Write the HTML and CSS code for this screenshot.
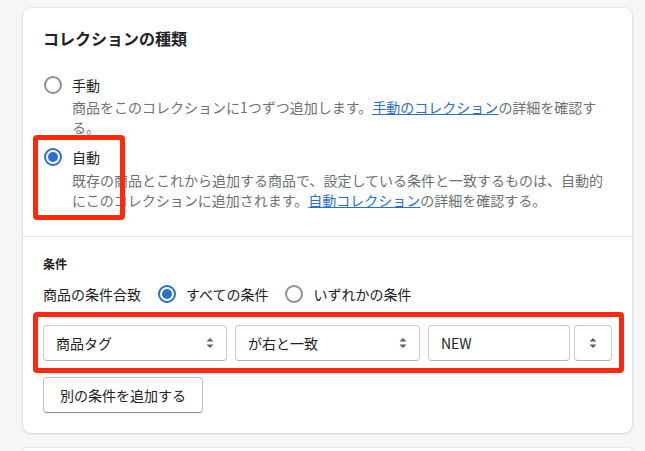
FILE: index.html
```html
<!DOCTYPE html>
<html lang="ja">
<head>
<meta charset="utf-8">
<link rel="stylesheet" href="styles.css">
</head>
<body>
<div class="page">
  <div class="card">
    <section class="section section-type">
      <h2 class="title">コレクションの種類</h2>
      <div class="choices">
        <div class="choice">
          <div class="choice-row">
            <span class="radio"></span>
            <span class="choice-label">手動</span>
          </div>
          <p class="help">商品をこのコレクションに1つずつ追加します。<a href="#" class="link">手動のコレクション</a>の詳細を確認する。</p>
        </div>
        <div class="choice choice-second">
          <div class="choice-row">
            <span class="radio radio-checked"></span>
            <span class="choice-label">自動</span>
          </div>
          <p class="help">既存の商品とこれから追加する商品で、設定している条件と一致するものは、自動的にこのコレクションに追加されます。<a href="#" class="link">自動コレクション</a>の詳細を確認する。</p>
        </div>
      </div>
      <div class="mark mark-auto"></div>
    </section>
    <section class="section section-cond">
      <h3 class="subheading">条件</h3>
      <div class="match-row">
        <span class="match-label">商品の条件合致</span>
        <span class="radio radio-checked radio-inline"></span>
        <span class="match-opt">すべての条件</span>
        <span class="radio radio-inline"></span>
        <span class="match-opt">いずれかの条件</span>
      </div>
      <div class="rule-row">
        <div class="select">
          <span class="select-text">商品タグ</span>
          <svg class="arrows" viewBox="0 0 20 20" width="20" height="20"><path d="M6.5 8.5L10 5l3.5 3.5z M6.5 11.5L10 15l3.5-3.5z" fill="#5c5f62"/></svg>
        </div>
        <div class="select">
          <span class="select-text">が右と一致</span>
          <svg class="arrows" viewBox="0 0 20 20" width="20" height="20"><path d="M6.5 8.5L10 5l3.5 3.5z M6.5 11.5L10 15l3.5-3.5z" fill="#5c5f62"/></svg>
        </div>
        <div class="value-group">
          <div class="input"><span class="input-text">NEW</span></div>
          <div class="stepper">
            <svg class="arrows" viewBox="0 0 20 20" width="20" height="20"><path d="M6.5 8.5L10 5l3.5 3.5z M6.5 11.5L10 15l3.5-3.5z" fill="#5c5f62"/></svg>
          </div>
        </div>
        <div class="mark mark-rule"></div>
      </div>
      <button class="button" type="button">別の条件を追加する</button>
    </section>
  </div>
  <div class="card card-next"></div>
</div>
</body>
</html>
```
FILE: styles.css
```css
* { box-sizing: border-box; }
html, body {
  margin: 0;
  padding: 0;
  background: #f6f6f7;
  font-family: "Noto Sans CJK JP", "Noto Sans", sans-serif;
  color: #202223;
  font-size: 14px;
  line-height: 20px;
  overflow: hidden;
}
.page {
  padding: 8px 13px 0 23px;
  height: 451px;
  overflow: hidden;
}
.card {
  background: #ffffff;
  border-radius: 8px;
  box-shadow: 0 0 0 1px rgba(63, 63, 68, 0.06), 0 1px 3px rgba(63, 63, 68, 0.16);
}
.card-next {
  margin-top: 15px;
  height: 3px;
  border-radius: 8px 8px 0 0;
}
.section {
  position: relative;
  padding: 20px;
}
.section-type {
  padding-top: 18px;
  padding-bottom: 26px;
}
.section-cond {
  border-top: 1px solid #e1e3e5;
  padding-top: 19px;
}
.title {
  margin: 0;
  font-size: 16px;
  line-height: 24px;
  font-weight: 700;
}
.choices {
  margin-top: 25px;
}
.choice-row {
  display: flex;
  align-items: center;
  height: 20px;
  padding-left: 1px;
}
.choice-second {
  margin-top: 10px;
}
.choice-label {
  margin-left: 10px;
}
.radio {
  width: 18px;
  height: 18px;
  border-radius: 50%;
  border: 2px solid #8c9196;
  background: #fff;
  flex: none;
  position: relative;
}
.radio-checked {
  border-color: #2c6ecb;
}
.radio-checked::after {
  content: "";
  position: absolute;
  left: 2px;
  top: 2px;
  width: 10px;
  height: 10px;
  border-radius: 50%;
  background: #2c6ecb;
}
.help {
  margin: 2px 0 0 29px;
  color: #6d7175;
}
.choice-second .help {
  margin-top: 3px;
}
.link {
  color: #2c6ecb;
  text-decoration: underline;
}
.mark {
  position: absolute;
  border: 5px solid #fb2a0e;
  border-radius: 4px;
  pointer-events: none;
}
.mark-auto {
  left: 10px;
  top: 127px;
  width: 92px;
  height: 85px;
}
.subheading {
  margin: 0;
  font-size: 12px;
  line-height: 16px;
  font-weight: 700;
}
.match-row {
  display: flex;
  align-items: center;
  margin-top: 12px;
  height: 20px;
}
.match-label {
  margin-right: 17px;
}
.match-opt {
  margin-left: 10px;
  margin-right: 17px;
}
.rule-row {
  position: relative;
  display: grid;
  grid-template-columns: 184px 185px 1fr;
  column-gap: 8px;
  margin-top: 21px;
}
.select, .input, .stepper {
  height: 36px;
  background: #fff;
  border: 1px solid #c9cccf;
  border-bottom-color: #aeb4b9;
  border-radius: 4px;
  display: flex;
  align-items: center;
}
.select {
  justify-content: space-between;
  padding: 0 6px 0 12px;
}
.select-text, .input-text {
  white-space: nowrap;
}
.input {
  flex: 1;
  padding-left: 12px;
}
.value-group {
  display: flex;
  gap: 4px;
}
.stepper {
  width: 38px;
  flex: none;
  justify-content: center;
}
.arrows {
  display: block;
  flex: none;
}
.mark-rule {
  left: -10px;
  top: -13px;
  width: 591px;
  height: 61px;
}
.button {
  display: block;
  margin-top: 16px;
  height: 36px;
  padding: 0 16px;
  font-family: inherit;
  font-size: 14px;
  color: #202223;
  background: #fff;
  border: 1px solid #babfc3;
  border-bottom-color: #8c9196;
  border-radius: 4px;
  box-shadow: 0 1px 0 rgba(0, 0, 0, 0.05);
}
```
